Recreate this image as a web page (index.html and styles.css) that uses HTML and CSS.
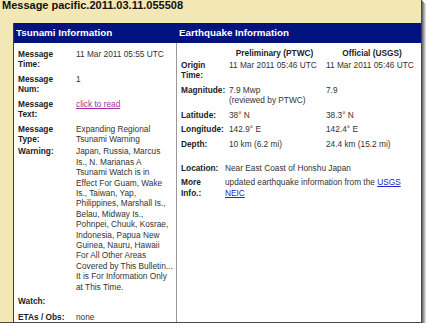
FILE: index.html
```html
<!DOCTYPE html>
<html>
<head>
<meta charset="utf-8">
<link rel="stylesheet" href="styles.css">
</head>
<body>
<div class="window">
  <h1 class="title">Message pacific.2011.03.11.055508</h1>
  <div class="panel">
    <div class="head">
      <div class="head-cell">Tsunami Information</div>
      <div class="head-cell">Earthquake Information</div>
    </div>
    <div class="body">
      <div class="tsunami">
        <div class="tgrid">
          <div class="lbl">Message<br>Time:</div>
          <div class="val">11 Mar 2011 05:55 UTC</div>
          <div class="lbl">Message<br>Num:</div>
          <div class="val">1</div>
          <div class="lbl">Message<br>Text:</div>
          <div class="val"><a class="visited" href="#">click to read</a></div>
          <div class="lbl">Message<br>Type:</div>
          <div class="val">Expanding Regional<br>Tsunami Warning</div>
          <div class="lbl warn">Warning:</div>
          <div class="val warn">Japan, Russia, Marcus<br>Is., N. Marianas A<br>Tsunami Watch is in<br>Effect For Guam, Wake<br>Is., Taiwan, Yap,<br>Philippines, Marshall Is.,<br>Belau, Midway Is.,<br>Pohnpei, Chuuk, Kosrae,<br>Indonesia, Papua New<br>Guinea, Nauru, Hawaii<br>For All Other Areas<br>Covered by This Bulletin...<br>It is For Information Only<br>at This Time.</div>
          <div class="lbl watch">Watch:</div>
          <div class="val watch"></div>
          <div class="lbl">ETAs / Obs:</div>
          <div class="val">none</div>
        </div>
      </div>
      <div class="quake">
        <div class="qgrid">
          <div class="lbl qhead"></div>
          <div class="qh qh1">Preliminary (PTWC)</div>
          <div class="qh qh2">Official (USGS)</div>
          <div class="lbl">Origin<br>Time:</div>
          <div class="val">11 Mar 2011 05:46 UTC</div>
          <div class="val">11 Mar 2011 05:46 UTC</div>
          <div class="lbl">Magnitude:</div>
          <div class="val">7.9 Mwp<br>(reviewed by PTWC)</div>
          <div class="val">7.9</div>
          <div class="lbl">Latitude:</div>
          <div class="val">38° N</div>
          <div class="val">38.3° N</div>
          <div class="lbl">Longitude:</div>
          <div class="val">142.9° E</div>
          <div class="val">142.4° E</div>
          <div class="lbl">Depth:</div>
          <div class="val">10 km (6.2 mi)</div>
          <div class="val">24.4 km (15.2 mi)</div>
        </div>
        <div class="lgrid">
          <div class="lbl">Location:</div>
          <div class="val">Near East Coast of Honshu Japan</div>
          <div class="lbl">More<br>Info.:</div>
          <div class="val">updated earthquake information from the <a class="link" href="#">USGS<br>NEIC</a></div>
        </div>
      </div>
    </div>
  </div>
</div>
</body>
</html>
```

FILE: styles.css
```css
html, body {
  margin: 0;
  padding: 0;
  background: #ffffff;
}
body {
  font-family: "Liberation Sans", Arial, sans-serif;
}
.window {
  width: 421px;
  height: 322px;
  background: #f2e7b5;
  overflow: hidden;
  border-right: 1px solid #4a4a4a;
  border-bottom: 1px solid #4a4a4a;
  box-shadow: 1px 1px 0 #6e6e6e, 2px 2px 0 #969696, 3px 3px 0 #b9b9b9, 4px 4px 0 #dadada;
}
.title {
  margin: -1px 0 0 2px;
  font-size: 11px;
  line-height: 12px;
  height: 12px;
  font-weight: bold;
  color: #111;
}
.panel {
  margin: 12px 0 0 13px;
  width: 430px;
  height: 320px;
  border-left: 1px solid #3b3b4a;
  background: #ffffff;
}
.head {
  display: grid;
  grid-template-columns: 163px 1fr;
  height: 20px;
  background: #00137f;
  color: #ffffff;
  font-weight: bold;
  font-size: 9.8px;
  line-height: 20px;
}
.head-cell {
  padding-left: 2px;
}
.body {
  display: grid;
  grid-template-columns: 163px 1fr;
  height: 300px;
}
.tsunami {
  border-right: 1px solid #9a9a9a;
}
.lbl {
  font-weight: bold;
  color: #222;
}
.val {
  color: #333;
}
.tgrid, .qgrid, .lgrid {
  display: grid;
  font-size: 8.3px;
  line-height: 10.4px;
  row-gap: 4.2px;
}
.tgrid {
  grid-template-columns: 58px 98px;
  padding: 5.8px 0 0 4px;
}
.warn {
  margin-top: -2.5px;
}
.watch {
  min-height: 12px;
}
.qgrid {
  grid-template-columns: 48px 97px 92px;
  padding: 4.7px 0 0 4px;
}
.qh {
  font-weight: bold;
  color: #222;
  height: 8px;
  text-align: center;
}
.qh1 {
  padding-right: 6px;
}
.qhead {
  height: 8px;
}
.lgrid {
  grid-template-columns: 44px 188px;
  padding: 13.2px 0 0 4px;
}
a.visited {
  color: #a0309e;
  text-decoration: underline;
}
a.link {
  color: #2323c8;
  text-decoration: underline;
}
```
